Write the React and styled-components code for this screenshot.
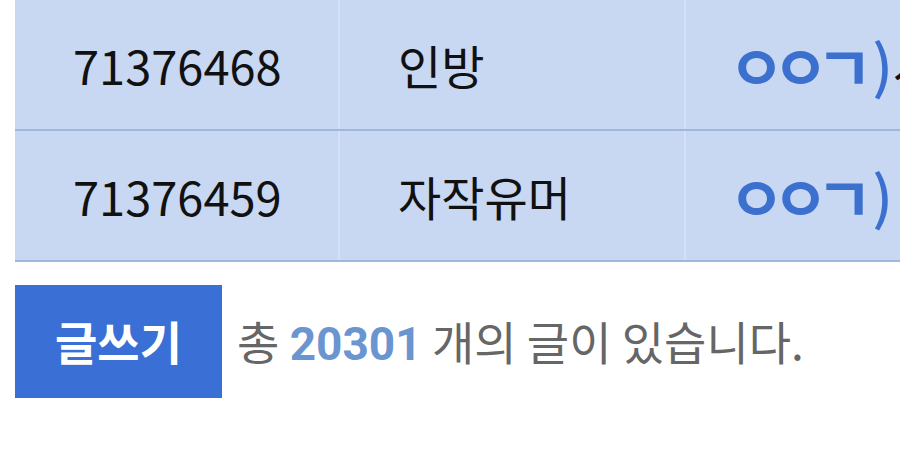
import React from "react"
import styled, { createGlobalStyle } from "styled-components"

const GlobalStyle = createGlobalStyle`
  html, body {
    margin: 0;
    padding: 0;
    background: #ffffff;
    overflow: hidden;
    font-family: "Noto Sans CJK KR", "Noto Sans", sans-serif;
  }
`

const Page = styled.div`
  width: 900px;
  height: 450px;
  overflow: hidden;
  padding-left: 15px;
  box-sizing: border-box;
`

// <BoardTable />

const BoardTable = styled.div`
  width: 1100px;
  display: flex;
  flex-direction: column;
`

const Row = styled.div`
  display: grid;
  grid-template-columns: 325px 346px 1fr;
  height: 129px;
  background: #c8d8f2;
  border-bottom: 2px solid #9fb6df;
`

const Cell = styled.div`
  display: flex;
  align-items: center;
  padding-left: ${props => props.pad || 58}px;
  font-size: 47px;
  color: #111111;
  white-space: nowrap;
  overflow: hidden;
  border-right: 2px solid #d4e0f5;

  &:last-child{
    border-right: none;
  }
`

const Tag = styled.span`
  display: inline-flex;
  align-items: center;
  color: #3c70cf;
`

const Jamo = styled.span`
  font-size: 62px;
  font-weight: 700;
  line-height: 1;
  letter-spacing: -13px;
  margin-left: -12px;
  margin-right: 12px;
`

const Paren = styled.span`
  font-size: 58px;
  font-weight: 500;
  margin-top: -4px;
`

// <BoardFooter />

const Footer = styled.div`
  display: flex;
  align-items: center;
  margin-top: 23px;
  gap: 15px;
`

const WriteButton = styled.button`
  width: 207px;
  height: 113px;
  border: none;
  background: #3a6fd6;
  color: #ffffff;
  font-family: inherit;
  font-size: 46px;
  font-weight: 700;
  padding: 0;
  padding-bottom: 4px;
`

const Summary = styled.span`
  font-size: 46px;
  color: #666666;
  padding-bottom: 4px;

  b{
    color: #6b95d0;
    font-weight: 700;
    font-family: Roboto, "Noto Sans", sans-serif;
  }
`

const posts = [
  { id: "71376468", category: "인방", title: "시청자 썰" },
  { id: "71376459", category: "자작유머", title: "" },
]

export default function App(){
  return (
    <>
      <GlobalStyle />
      <Page>
        <BoardTable>
          {posts.map(post => (
            <Row key={post.id}>
              <Cell>{post.id}</Cell>
              <Cell>{post.category}</Cell>
              <Cell pad={54}>
                <Tag><Jamo>ㅇㅇㄱ</Jamo><Paren>)</Paren></Tag>{post.title}
              </Cell>
            </Row>
          ))}
        </BoardTable>
        <Footer>
          <WriteButton>글쓰기</WriteButton>
          <Summary>총 <b>20301</b> 개의 글이 있습니다.</Summary>
        </Footer>
      </Page>
    </>
  )
}
